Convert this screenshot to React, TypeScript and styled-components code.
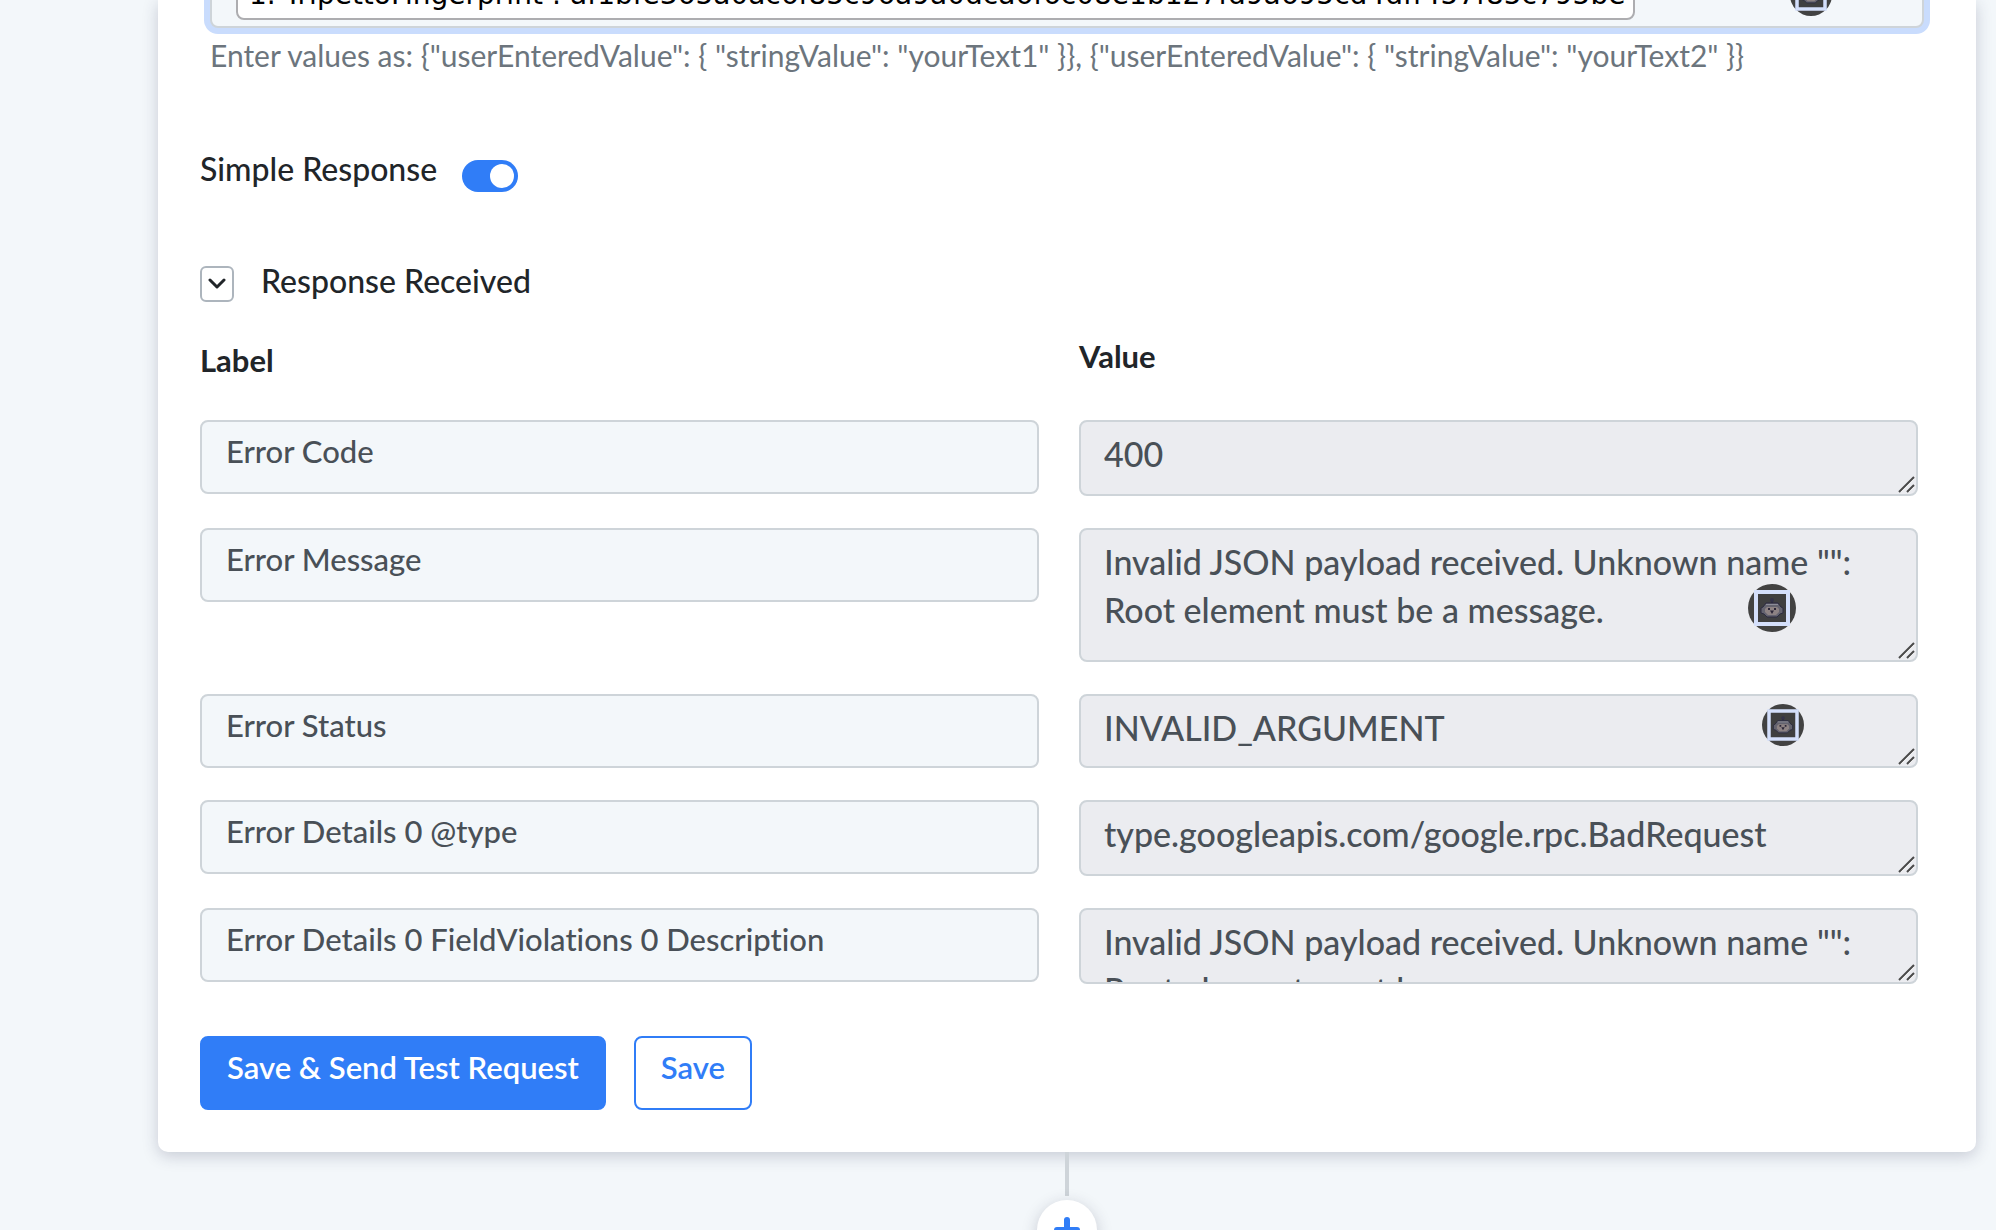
import React, { useState } from 'react';
import styled, { createGlobalStyle } from 'styled-components';

const blue = '#307df7';
const ink = '#212529';
const line = '#ced4d9';
const sans = "Lato, 'Open Sans', sans-serif";

const GlobalStyle = createGlobalStyle`
  *, *::before, *::after { box-sizing: border-box; }
  body {
    margin: 0;
    background: #f3f7fa;
    color: ${ink};
    font-family: ${sans};
    font-weight: 500;
  }
`;

const Page = styled.main`
  display: flex;
  flex-direction: column;
  height: 100vh;
  padding: 0 20px 0 158px;
  overflow: hidden;
`;

const Card = styled.section`
  display: flex;
  flex-direction: column;
  flex: none;
  padding: 0 58px 42px 42px;
  background: #fff;
  border-radius: 0 0 10px 10px;
  box-shadow: 0 4px 16px rgba(40, 45, 80, 0.22);
`;

const TokenField = styled.div`
  position: relative;
  display: flex;
  margin: -40px -6px 0 10px;
  padding: 6px 24px;
  background: #f3f7fa;
  border: 2px solid ${line};
  border-radius: 8px;
  box-shadow: 0 0 0 6px #c9dcfd;
`;

const Token = styled.span`
  padding: 2px 8px 0 11px;
  background: #fff;
  border: 2px solid #adadb0;
  border-radius: 8px;
  color: #000;
  font: 400 28px/46px 'DejaVu Sans', sans-serif;
  font-variant-ligatures: none;
  white-space: nowrap;
`;

const Hint = styled.p`
  margin: 7px 0 0 10px;
  color: #6c757d;
  font-size: 30px;
  font-weight: 400;
  line-height: 40px;
  white-space: nowrap;
`;

const OptionRow = styled.div<{ $top: number }>`
  display: flex;
  align-items: flex-end;
  gap: 25px;
  margin-top: ${(p) => p.$top}px;
  font-size: 32px;
  line-height: 46px;
`;

const Switch = styled.input`
  display: flex;
  align-items: center;
  width: 56px;
  height: 32px;
  margin: 0;
  padding: 4px;
  appearance: none;
  background: #adb5bd;
  border-radius: 16px;
  cursor: pointer;

  &::before {
    content: '';
    width: 24px;
    height: 24px;
    background: #fff;
    border-radius: 50%;
  }

  &:checked {
    justify-content: flex-end;
    background: ${blue};
  }
`;

const ToggleButton = styled.button`
  display: grid;
  place-items: center;
  width: 34px;
  height: 36px;
  margin: 0 2px 2px 0;
  padding: 0;
  background: #fff;
  border: 2px solid #adb5bd;
  border-radius: 6px;
`;

const ResponseGrid = styled.div<{ $top: number }>`
  display: grid;
  grid-template-columns: 1fr 1fr;
  align-items: start;
  gap: 32px 40px;
  margin-top: ${(p) => p.$top}px;
`;

const ColumnTitle = styled.div<{ $drop?: boolean }>`
  padding-top: ${(p) => (p.$drop ? 4 : 0)}px;
  font-size: 31px;
  font-weight: 700;
  line-height: 48px;
`;

const LabelInput = styled.input`
  width: 100%;
  height: 74px;
  padding: 0 22px 12px 24px;
  background: #f3f7fa;
  border: 2px solid ${line};
  border-radius: 8px;
  color: #495057;
  font: 500 31px ${sans};
  font-variant-ligatures: none;
`;

const ValueBox = styled.div`
  position: relative;
  display: flex;
`;

const ValueArea = styled.textarea<{ $height: number }>`
  width: 100%;
  height: ${(p) => p.$height}px;
  padding: 8px 20px 8px 23px;
  overflow: hidden;
  resize: none;
  background: #ebecf0;
  border: 2px solid ${line};
  border-radius: 8px;
  color: #495057;
  font: 500 34px/48px ${sans};
  font-variant-ligatures: none;
`;

const Grip = styled.svg`
  position: absolute;
  right: 3px;
  bottom: 3px;
`;

const BadgeButton = styled.button<{ $size: number; $top: number; $right: number }>`
  position: absolute;
  top: ${(p) => p.$top}px;
  right: ${(p) => p.$right}px;
  display: flex;
  width: ${(p) => p.$size}px;
  height: ${(p) => p.$size}px;
  padding: 0;
  background: none;
  border: 0;

  svg {
    width: 100%;
    height: 100%;
  }
`;

const Actions = styled.div`
  display: flex;
  gap: 28px;
  margin-top: 52px;
`;

const ActionButton = styled.button<{ $primary?: boolean }>`
  height: 74px;
  padding: 0 25px 12px;
  background: ${(p) => (p.$primary ? blue : '#fff')};
  border: 2px solid ${blue};
  border-radius: 8px;
  color: ${(p) => (p.$primary ? '#fff' : blue)};
  font: 600 31px ${sans};
`;

const Connector = styled.div`
  display: flex;
  flex: none;
  flex-direction: column;
  align-items: center;
  gap: 4px;

  &::before {
    content: '';
    width: 4px;
    height: 44px;
    background: ${line};
  }
`;

const AddButton = styled.button`
  display: grid;
  place-items: center;
  width: 60px;
  height: 60px;
  padding: 0;
  background: #fff;
  border: 0;
  border-radius: 50%;
  box-shadow: 0 4px 16px rgba(40, 40, 70, 0.22);
`;

function RobotBadge(props: { size: number; top: number; right: number }) {
  return (
    <BadgeButton type="button" aria-label="Assistant" $size={props.size} $top={props.top} $right={props.right}>
      <svg viewBox="0 0 48 48">
        <circle cx="24" cy="24" r="24" fill="#424242" />
        <rect x="8" y="8" width="32" height="32" fill="#3f3f40" stroke="#d4dffb" strokeWidth="4" />
        <path d="M24 19v-3" stroke="#2c2b40" strokeWidth="2" />
        <circle cx="24" cy="16" r="2" fill="#34334a" />
        <path d="M18 19h12l3 4 2 1v5l-3 1-3 3H19l-3-3-3-1v-5l2-1z" fill="#64636f" stroke="#2c2b40" strokeWidth="1" />
        <path d="M18 20.500h12" stroke="#8c8c98" strokeWidth="1" />
        <path d="M19 23h10l2 2v3l-3 3h-8l-3-3v-3z" fill="#8d8283" />
        <path d="M20 24h2v2h-2zM26 24h2v2h-2zM22 26.500h4L24 30z" fill="#2c2638" />
      </svg>
    </BadgeButton>
  );
}

type Entry = { label: string; value: string; height: number; badge?: { size: number; top: number; right: number } };

const entries: Entry[] = [
  { label: 'Error Code', value: '400', height: 76 },
  {
    label: 'Error Message',
    value: 'Invalid JSON payload received. Unknown name "": Root element must be a message.',
    height: 134,
    badge: { size: 48, top: 56, right: 122 },
  },
  { label: 'Error Status', value: 'INVALID_ARGUMENT', height: 74, badge: { size: 42, top: 10, right: 114 } },
  { label: 'Error Details 0 @type', value: 'type.googleapis.com/google.rpc.BadRequest', height: 76 },
  {
    label: 'Error Details 0 FieldViolations 0 Description',
    value: 'Invalid JSON payload received. Unknown name "": Root element must be a message.',
    height: 76,
  },
];

export default function App() {
  const [simple, setSimple] = useState(true);
  const [open, setOpen] = useState(true);

  return (
    <>
      <GlobalStyle />
      <Page>
        <Card>
          <TokenField>
            <Token>1. TripettoFingerprint : af1bfe365a0ac6f85c96a9a0dca6f6c08e1b127fd9a695cd4dff457f85c795be</Token>
            <RobotBadge size={42} top={12} right={90} />
          </TokenField>
          <Hint>
            {'Enter values as: {"userEnteredValue": { "stringValue": "yourText1" }}, {"userEnteredValue": { "stringValue": "yourText2" }}'}
          </Hint>

          <OptionRow $top={71}>
            <label htmlFor="simple-response">Simple Response</label>
            <Switch
              id="simple-response"
              type="checkbox"
              role="switch"
              checked={simple}
              onChange={(e) => setSimple(e.target.checked)}
            />
          </OptionRow>

          <OptionRow $top={66}>
            <ToggleButton
              type="button"
              aria-expanded={open}
              aria-labelledby="response-title"
              onClick={() => setOpen(!open)}
            >
              <svg width="18" height="12" viewBox="0 0 18 12" fill="none">
                <path d="M2 2l7 7 7-7" stroke={ink} strokeWidth="3" strokeLinecap="round" strokeLinejoin="round" />
              </svg>
            </ToggleButton>
            <span id="response-title">Response Received</span>
          </OptionRow>

          {open && (
            <>
              <ResponseGrid $top={28}>
                <ColumnTitle id="label-title" $drop>Label</ColumnTitle>
                <ColumnTitle id="value-title">Value</ColumnTitle>
              </ResponseGrid>
              <ResponseGrid $top={36}>
                {entries.map((entry, i) => (
                  <React.Fragment key={entry.label}>
                    <LabelInput id={`label-${i}`} aria-labelledby="label-title" defaultValue={entry.label} />
                    <ValueBox>
                      <ValueArea
                        readOnly
                        aria-labelledby={`label-${i} value-title`}
                        $height={entry.height}
                        value={entry.value}
                      />
                      {entry.badge && <RobotBadge {...entry.badge} />}
                      <Grip width="17" height="17" viewBox="0 0 17 17" fill="none">
                        <path d="M3 16L16 3M11 16l5-5" stroke="#fff" strokeWidth="1" />
                        <path d="M1 16L16 1M9 16l7-7" stroke="#4a4a4a" strokeWidth="2" />
                      </Grip>
                    </ValueBox>
                  </React.Fragment>
                ))}
              </ResponseGrid>
            </>
          )}

          <Actions>
            <ActionButton type="button" $primary>Save &amp; Send Test Request</ActionButton>
            <ActionButton type="button">Save</ActionButton>
          </Actions>
        </Card>

        <Connector>
          <AddButton type="button" aria-label="Add step">
            <svg width="26" height="26" viewBox="0 0 26 26" fill="none">
              <path d="M13 3v20M3 13h20" stroke={blue} strokeWidth="6" strokeLinecap="round" />
            </svg>
          </AddButton>
        </Connector>
      </Page>
    </>
  );
}
